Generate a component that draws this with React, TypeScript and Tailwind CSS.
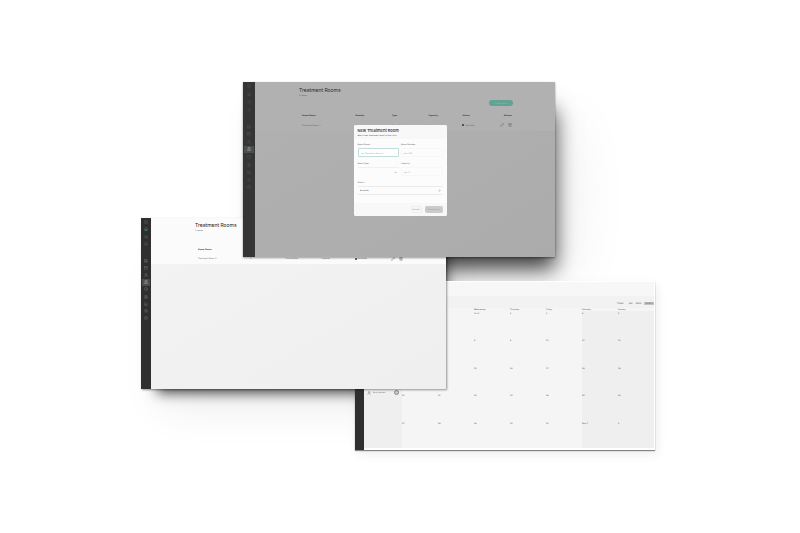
import {
  Bell,
  Calendar,
  ChartColumn,
  ChevronDown,
  ChevronsUpDown,
  CircleHelp,
  Clock,
  DoorOpen,
  FileText,
  House,
  LayoutGrid,
  Menu,
  Pencil,
  Search,
  Settings,
  Trash2,
  User,
  Users,
} from 'lucide-react';
import type { ReactNode } from 'react';
import clsx from 'clsx';

const topLinks = [
  { label: 'Menu', icon: Menu },
  { label: 'Home', icon: House, accent: true },
  { label: 'Search', icon: Search },
  { label: 'Notifications', icon: Bell },
];

const mainLinks = [
  { label: 'Dashboard', icon: LayoutGrid },
  { label: 'Calendar', icon: Calendar },
  { label: 'Patients', icon: Users },
  { label: 'Treatment rooms', icon: DoorOpen, active: true },
  { label: 'Schedule', icon: Clock },
  { label: 'Documents', icon: FileText },
  { label: 'Reports', icon: ChartColumn },
  { label: 'Settings', icon: Settings },
  { label: 'Help', icon: CircleHelp },
];

const weekDays = ['Monday', 'Tuesday', 'Wednesday', 'Thursday', 'Friday', 'Saturday', 'Sunday'];

const weeks = [
  ['29', '30', 'Oct 1', '2', '3', '4', '5'],
  ['6', '7', '8', '9', '10', '11', '12'],
  ['13', '14', '15', '16', '17', '18', '19'],
  ['20', '21', '22', '23', '24', '25', '26'],
  ['27', '28', '29', '30', '31', 'Nov 1', '2'],
];

const Sidebar = ({ large = false, narrow = false }: { large?: boolean; narrow?: boolean }) => (
  <nav
    className={clsx(
      'flex flex-none flex-col',
      large ? 'w-3 bg-[#353535] text-[#5c5c5c]' : 'bg-[#2f2f2f] text-[#7c7c7c]',
      !large && (narrow ? 'w-[9px]' : 'w-[10px]')
    )}
  >
    <div className={clsx('flex flex-col', large ? 'h-8' : 'h-[30px]')}>
      {topLinks.map(({ label, icon: Icon, accent }) => (
        <a
          key={label}
          href="#"
          aria-label={label}
          className={clsx('flex flex-1 items-center justify-center', accent && !large && 'text-[#4fae94]')}
        >
          <Icon size={4} />
        </a>
      ))}
    </div>
    <div className={clsx('mt-[9px] flex flex-col', large ? 'h-[68px]' : 'h-[65px]')}>
      {mainLinks.map(({ label, icon: Icon, active }) => (
        <a
          key={label}
          href="#"
          aria-label={label}
          className={clsx(
            'flex flex-1 items-center justify-center',
            active && 'mx-px bg-[#4b4f4e] text-[#b5b9b8]'
          )}
        >
          <Icon size={4} />
        </a>
      ))}
    </div>
  </nav>
);

const RoomsPage = ({ dimmed = false }: { dimmed?: boolean }) => (
  <div
    className={clsx(
      'flex min-w-0 flex-1 flex-col bg-linear-to-br',
      dimmed ? 'from-[#b1b1b1] to-[#ababab]' : 'from-[#f3f3f3] to-[#efefef]'
    )}
  >
    <div
      className={clsx(
        'flex flex-col pr-[42px] pl-11',
        dimmed ? 'bg-[#b1b1b1] pt-[5px]' : 'bg-[#fbfbfb] pt-1'
      )}
    >
      <h1
        className={clsx(
          "font-['Inter',sans-serif] text-[5px] leading-[6px]",
          dimmed ? 'text-[#2b2b2b]' : 'text-[#222222]'
        )}
      >
        Treatment Rooms
      </h1>
      <p className="mt-px text-[2px] leading-[3px] text-[#555555]">1 rooms</p>
      <button
        type="button"
        className={clsx(
          'mt-[3px] h-[6px] w-6 self-end rounded-full text-center text-[2px] leading-[6px]',
          dimmed ? 'bg-[#62a396] text-[#8cc4b9]' : 'bg-[#7fd8c5] text-white'
        )}
      >
        + New Room
      </button>
      <table
        className={clsx('w-full table-fixed text-left text-[2px] leading-[3px]', dimmed ? 'mt-[5px]' : 'mt-1')}
      >
        <thead className={dimmed ? 'text-[#3a3a3a]' : 'text-[#444444]'}>
          <tr className="h-2">
            <th className="w-[25%] pl-[3px] font-bold">Room Name</th>
            <th className="w-[17%] pl-[3px] font-bold">Number</th>
            <th className="w-[17%] pl-[3px] font-bold">Type</th>
            <th className="w-[16%] pl-[3px] font-bold">Capacity</th>
            <th className="w-[16%] pl-[3px] font-bold">Status</th>
            <th className="w-[9%] pr-px text-right font-bold">Actions</th>
          </tr>
        </thead>
        <tbody className={dimmed ? 'text-[#666666]' : 'text-[#666666]'}>
          <tr className={dimmed ? 'h-3' : 'h-[11px]'}>
            <td className="pl-[3px]">Treatment Room 1</td>
            <td className="pl-[3px]">1</td>
            <td className="pl-[3px]">Consultation</td>
            <td className="pl-[3px]">1 person</td>
            <td className="pl-[3px]">
              <span className="flex items-center gap-px">
                <span className="size-[2px] rounded-full bg-[#1c3d36]" />
                Available
              </span>
            </td>
            <td>
              <span className="flex items-center justify-end gap-1 pr-px">
                <button type="button" aria-label="Edit room">
                  <Pencil size={4} />
                </button>
                <button type="button" aria-label="Delete room">
                  <Trash2 size={4} />
                </button>
              </span>
            </td>
          </tr>
        </tbody>
      </table>
    </div>
  </div>
);

type FieldProps = {
  id: string;
  label: string;
  className?: string;
  children: ReactNode;
};

const Field = ({ id, label, className, children }: FieldProps) => (
  <div className={clsx('flex min-w-0 flex-col gap-[2px]', className)}>
    <label htmlFor={id} className="text-[2px] leading-[3px] whitespace-nowrap text-[#555555]">
      {label}
    </label>
    {children}
  </div>
);

const NewRoomDialog = () => (
  <form
    role="dialog"
    aria-label="New Treatment Room"
    className="flex h-[91px] w-[93px] flex-col overflow-hidden rounded-[2px] bg-[#fcfcfc]"
    onSubmit={(event) => event.preventDefault()}
  >
    <div className="bg-[#f8f8f8] px-1 pt-[3px] pb-[2px]">
      <h2 className="font-['Inter',sans-serif] text-[4px] leading-[5px] font-medium text-[#222222]">
        New Treatment Room
      </h2>
      <p className="mt-px text-[2px] leading-[3px] whitespace-nowrap text-[#444444]">
        Add a new treatment room to the clinic
      </p>
    </div>
    <div className="grid grid-cols-2 gap-x-[2px] gap-y-[5px] px-1 pt-1">
      <Field id="room-name" label="Room Name *">
        <input
          id="room-name"
          type="text"
          placeholder="e.g. Treatment Room 1"
          className="h-[9px] w-full rounded-[1px] border border-[#c3dcd8] bg-white px-[2px] text-[2px] leading-[3px] outline-none placeholder:text-[#a0a0a0]"
        />
      </Field>
      <Field id="room-number" label="Room Number">
        <input
          id="room-number"
          type="text"
          placeholder="e.g. 101"
          className="h-[9px] w-full rounded-[1px] border border-[#f7f7f7] px-[2px] text-[2px] leading-[3px] outline-none placeholder:text-[#909090]"
        />
      </Field>
      <Field id="room-type" label="Room Type">
        <div className="flex h-[9px] items-center border-t border-[#f0f0f0] px-[2px] text-[#555555]">
          <select id="room-type" className="min-w-0 flex-1 appearance-none text-[2px] leading-[3px]" />
          <ChevronDown size={3} strokeWidth={3} />
        </div>
      </Field>
      <Field id="room-capacity" label="Capacity">
        <input
          id="room-capacity"
          type="text"
          placeholder="e.g. 2"
          className="h-[9px] w-full rounded-[1px] border border-[#f7f7f7] px-[2px] text-[2px] leading-[3px] outline-none placeholder:text-[#909090]"
        />
      </Field>
      <Field id="room-status" label="Status *" className="col-span-2">
        <div className="flex h-[9px] items-center rounded-[1px] border-y border-[#ebebeb] px-[2px] text-[#444444]">
          <select id="room-status" className="min-w-0 flex-1 appearance-none text-[2px] leading-[3px]">
            <option>Available</option>
          </select>
          <ChevronsUpDown size={3} />
        </div>
      </Field>
    </div>
    <div className="mt-auto flex justify-end gap-[3px] bg-[#f8f8f8] px-1 py-[3px] text-[2px] leading-[3px]">
      <button type="button" className="h-[7px] w-[11px] rounded-[2px] border border-[#eeeeee] text-[#777777]">
        Cancel
      </button>
      <button type="submit" className="h-[7px] w-[18px] rounded-[2px] bg-[#cbcbcb] text-[#999999]">
        Create Room
      </button>
    </div>
  </form>
);

const CalendarPage = () => (
  <div className="flex min-w-0 flex-1 flex-col border-t border-r border-b-2 border-white bg-[#f5f5f5]">
    <div className="h-[14px] flex-none bg-[#f7f7f7]" />
    <div className="flex min-h-0 flex-1">
      <aside className="w-[38px] flex-none bg-[#efefef] pt-[94px]">
        <div className="flex items-center gap-[2px] px-[3px] text-[2px] leading-[3px] text-[#666666]">
          <User size={4} />
          <span className="flex-1 whitespace-nowrap">Anna Jensen</span>
          <span className="size-[5px] rounded-full border border-[#888888] bg-[#c8c8c8]" />
        </div>
      </aside>
      <div className="flex min-w-0 flex-1 flex-col">
        <div className="flex h-3 flex-none items-center justify-end gap-[3px] bg-[#f2f2f2] pt-[3px] text-[2px] leading-[3px] text-[#444444]">
          <button type="button" className="mr-[2px]">
            TODAY
          </button>
          <button type="button">DAY</button>
          <button type="button">WEEK</button>
          <button type="button" className="bg-[#c4c4c4] px-px">
            MONTH
          </button>
        </div>
        <table className="w-full flex-1 table-fixed text-left text-[2px] leading-[3px] text-[#444444]">
          <thead>
            <tr>
              {weekDays.map((day) => (
                <th key={day} className="h-[3px] font-medium">
                  {day}
                </th>
              ))}
            </tr>
          </thead>
          <tbody>
            {weeks.map((week) => (
              <tr key={week[0]} className="h-[27px]">
                {week.map((date, index) => (
                  <td key={date} className={clsx('pt-px align-top', index > 4 && 'bg-[#efefef]')}>
                    {date}
                  </td>
                ))}
              </tr>
            ))}
          </tbody>
        </table>
      </div>
    </div>
  </div>
);

export default function App() {
  return (
    <main className="flex min-h-screen items-center justify-center overflow-hidden bg-white pr-1 font-['DejaVu_Sans',sans-serif]">
      <div className="relative h-[369px] w-[514px] flex-none">
        {/* shadows on the desktop, kept below all three windows */}
        <div className="absolute top-0 left-[102px] h-[175px] w-[312px] shadow-[8px_20px_20px_-8px_rgba(0,0,0,0.75),30px_30px_60px_-10px_rgba(0,0,0,0.06)]" />
        <div className="absolute top-[136px] left-0 h-[171px] w-[305px] shadow-[8px_12px_12px_-8px_rgba(0,0,0,0.7),10px_30px_40px_-10px_rgba(0,0,0,0.07)]" />

        <section
          aria-label="Calendar"
          className="absolute top-[199px] left-[214px] flex h-[169px] w-[300px] overflow-hidden shadow-[0px_1px_1px_rgba(0,0,0,0.45),2px_4px_10px_rgba(0,0,0,0.08)]"
        >
          <Sidebar narrow />
          <CalendarPage />
        </section>

        <section
          aria-label="Treatment rooms"
          className="absolute top-[136px] left-0 flex h-[171px] w-[305px] overflow-hidden shadow-[1px_1px_2px_rgba(0,0,0,0.4)]"
        >
          <Sidebar />
          <RoomsPage />
        </section>

        <section
          aria-label="New treatment room"
          className="absolute top-0 left-[102px] flex h-[175px] w-[312px] overflow-hidden shadow-[0px_1px_2px_rgba(0,0,0,0.4)]"
        >
          <Sidebar large />
          <RoomsPage dimmed />
          <div className="absolute inset-0 flex items-center justify-center pt-[2px] pl-[2px]">
            <NewRoomDialog />
          </div>
        </section>
      </div>
    </main>
  );
}
